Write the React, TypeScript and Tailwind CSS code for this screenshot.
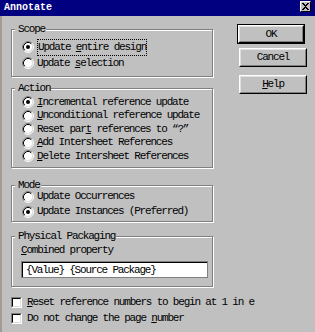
import type { ReactNode } from 'react';

const FONT = "font-['Liberation_Mono',monospace] text-[11px] tracking-[-1.2px] leading-none text-black whitespace-nowrap";

function Radio({ checked }: { checked?: boolean }) {
  return (
    <svg width="12" height="12" viewBox="0 0 12 12" className="mr-[3px] shrink-0">
      <circle cx="6" cy="6" r="4.5" fill="#fff" />
      <path d="M 2.11 9.89 A 5.5 5.5 0 0 1 9.89 2.11" stroke="#808080" fill="none" />
      <path d="M 9.89 2.11 A 5.5 5.5 0 0 1 2.11 9.89" stroke="#fff" fill="none" />
      <path d="M 2.82 9.18 A 4.5 4.5 0 0 1 9.18 2.82" stroke="#000" fill="none" />
      <path d="M 9.18 2.82 A 4.5 4.5 0 0 1 2.82 9.18" stroke="#dfdfdf" fill="none" />
      {checked && <circle cx="6" cy="6" r="2" fill="#000" />}
    </svg>
  );
}

function Checkbox() {
  return (
    <div className="mr-[5px] h-[11px] w-[11px] shrink-0 border border-t-[#808080] border-l-[#808080] border-b-white border-r-white">
      <div className="h-full w-full border border-t-black border-l-black border-b-[#dfdfdf] border-r-[#dfdfdf] bg-white" />
    </div>
  );
}

function Group({ label, className, children }: { label: string; className: string; children: ReactNode }) {
  return (
    <div className={`relative w-[202px] border border-[#808080] shadow-[1px_1px_0_#fff,inset_1px_1px_0_#fff] ${className}`}>
      <span className="absolute left-[3px] top-[-7px] bg-[#c0c0c0] pl-[3px] pr-[1px] leading-[12px]">{label}</span>
      {children}
    </div>
  );
}

function Option({ checked, h, children }: { checked?: boolean; h: string; children: ReactNode }) {
  return (
    <div className={`flex items-center pl-[10px] ${h}`}>
      <Radio checked={checked} />
      <span>{children}</span>
    </div>
  );
}

function Button({ children, isDefault, className }: { children: ReactNode; isDefault?: boolean; className: string }) {
  return (
    <div className={`w-[68px] ${isDefault ? 'border border-black' : ''} ${className}`}>
      <div className="h-full w-full border border-t-white border-l-white border-b-black border-r-black">
        <div className="flex h-full w-full items-center justify-center border border-t-[#dfdfdf] border-l-[#dfdfdf] border-b-[#808080] border-r-[#808080]">
          {children}
        </div>
      </div>
    </div>
  );
}

export default function App() {
  return (
    <div className={`h-[332px] w-[315px] overflow-hidden bg-[#c0c0c0] ${FONT}`}>
      <div className="flex h-[16px] items-start justify-between bg-[#000080] pl-[4px] pr-[4px]">
        <span className="mt-[3px] text-[10px] font-bold tracking-normal text-white">Annotate</span>
        <div className="mt-[1px] h-[11px] w-[11px] border border-t-white border-l-white border-b-black border-r-black bg-[#c0c0c0]">
          <svg width="9" height="9" viewBox="0 0 9 9" shapeRendering="crispEdges">
            <path d="M1 1h2v1h1v1h1V2h1V1h2v1H7v1H6v1H5v1h1v1h1v1h1v1H6V7H5V6H4v1H3v1H1V7h1V6h1V5h1V4H3V3H2V2H1z" fill="#000" />
          </svg>
        </div>
      </div>

      <div className="flex h-[316px] border-l-2 border-[#a39b93]">
        <div className="ml-[9px] flex w-[203px] shrink-0 flex-col">
          <Group label="Scope" className="mt-[13px] h-[48px] pt-[9px]">
            <div className="flex h-[16px] items-center pl-[10px]">
              <Radio checked />
              <span className="border border-dotted border-black px-0 py-[2px]">
                Update <u>e</u>ntire design
              </span>
            </div>
            <Option h="h-[16px]">
              Update <u>s</u>election
            </Option>
          </Group>

          <Group label="Action" className="mt-[11px] h-[80px] pt-[6px]">
            <Option checked h="h-[14px]">
              <u>I</u>ncremental reference update
            </Option>
            <Option h="h-[13px]">
              <u>U</u>nconditional reference update
            </Option>
            <Option h="h-[14px]">
              Reset par<u>t</u> references to “?”
            </Option>
            <Option h="h-[13px]">
              <u>A</u>dd Intersheet References
            </Option>
            <Option h="h-[14px]">
              <u>D</u>elete Intersheet References
            </Option>
          </Group>

          <Group label="Mode" className="mt-[17px] h-[37px] pt-[3px]">
            <Option h="h-[15px]">Update Occurrences</Option>
            <Option checked h="h-[15px]">
              Update Instances (Preferred)
            </Option>
          </Group>

          <Group label="Physical Packaging" className="mt-[14px] h-[51px] pt-[7px]">
            <div className="flex h-[12px] items-center pl-[9px]">
              <span>
                <u>C</u>ombined property
              </span>
            </div>
            <div className="ml-[9px] mt-[5px] h-[17px] w-[187px] border border-[#808080]">
              <div className="flex h-full w-full items-center border-l border-t border-black bg-white pl-[3px]">
                {'{Value} {Source Package}'}
              </div>
            </div>
          </Group>

          <div className="mt-[10px] flex h-[11px] items-center">
            <Checkbox />
            <span>
              <u>R</u>eset reference numbers to begin at 1 in e
            </span>
          </div>
          <div className="mt-[5px] flex h-[11px] items-center">
            <Checkbox />
            <span>
              Do not change the page <u>n</u>umber
            </span>
          </div>
        </div>

        <div className="ml-[23px] mt-[8px] flex shrink-0 flex-col">
          <Button isDefault className="h-[20px]">
            OK
          </Button>
          <Button className="ml-[2px] mt-[4px] h-[19px]">Cancel</Button>
          <Button className="ml-[2px] mt-[8px] h-[19px]">
            <u>H</u>elp
          </Button>
        </div>
      </div>
    </div>
  );
}
